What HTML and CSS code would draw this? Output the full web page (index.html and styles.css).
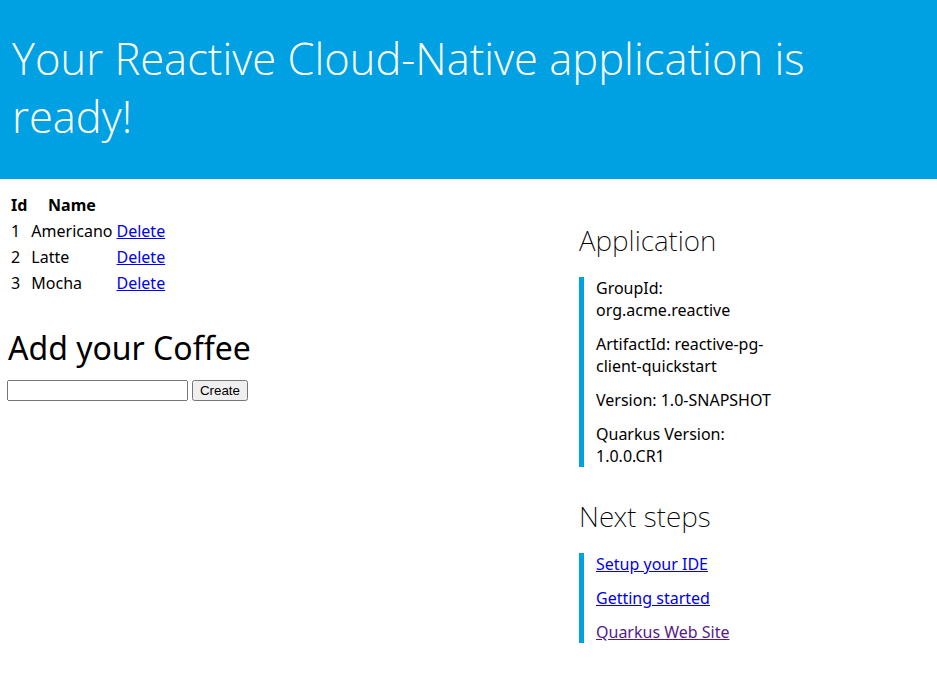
FILE: index.html
```html
<!DOCTYPE html>
<html>
<head>
<meta charset="utf-8">
<title>Coffee</title>
<link rel="stylesheet" href="styles.css">
</head>
<body>
<div class="banner">Your Reactive Cloud-Native application is ready!</div>
<div class="container">
  <div class="left-column">
    <table class="coffee-table">
      <tr><th>Id</th><th>Name</th><th></th></tr>
      <tr><td>1</td><td>Americano</td><td><a href="#" class="link">Delete</a></td></tr>
      <tr><td>2</td><td>Latte</td><td><a href="#" class="link">Delete</a></td></tr>
      <tr><td>3</td><td>Mocha</td><td><a href="#" class="link">Delete</a></td></tr>
    </table>
    <h2 class="add-title">Add your Coffee</h2>
    <form class="add-form">
      <input type="text" class="name-input"> <button type="button" class="create-btn">Create</button>
    </form>
  </div>
  <div class="right-column">
    <div class="right-section">
      <h3 class="section-title">Application</h3>
      <ul class="section-list">
        <li>GroupId: org.acme.reactive</li>
        <li>ArtifactId: reactive-pg-client-quickstart</li>
        <li>Version: 1.0-SNAPSHOT</li>
        <li>Quarkus Version: 1.0.0.CR1</li>
      </ul>
    </div>
    <div class="right-section">
      <h3 class="section-title">Next steps</h3>
      <ul class="section-list">
        <li><a href="#" class="link">Setup your IDE</a></li>
        <li><a href="#" class="link">Getting started</a></li>
        <li><a href="#" class="link visited">Quarkus Web Site</a></li>
      </ul>
    </div>
  </div>
</div>
</body>
</html>
```

FILE: styles.css
```css
html, body {
  margin: 0;
  padding: 0;
}
body {
  font-family: "Noto Sans", "Open Sans", sans-serif;
  font-size: 16px;
  color: #000;
  background: #fff;
}
.banner {
  font-family: "Open Sans", "Noto Sans", sans-serif;
  font-weight: 300;
  font-size: 43.5px;
  line-height: 58px;
  padding: 30px 12px 33px 12px;
  background-color: #00A1E2;
  color: #fff;
}
.container {
  display: flex;
  width: 100%;
}
.left-column {
  width: 542px;
  padding: 12px 0 0 7px;
  box-sizing: border-box;
}
.coffee-table {
  border-spacing: 2px;
  margin-left: 1px;
}
.coffee-table th, .coffee-table td {
  padding: 1px;
}
.coffee-table th {
  font-weight: 700;
  text-align: center;
}
.add-title {
  font-size: 32px;
  font-weight: 400;
  line-height: 1.5;
  margin: 26.6px 0 8px 1px;
}
.add-form {
  margin: 2px 0 0 0;
  display: flex;
  align-items: center;
  gap: 4px;
}
.name-input {
  width: 181px;
  height: 21px;
  box-sizing: border-box;
  margin: 0;
}
.create-btn {
  font-family: "Liberation Sans", Arial, sans-serif;
  font-size: 13.33px;
  height: 21px;
  width: 56px;
  padding: 0;
  margin: 0;
}
.right-column {
  width: 234px;
  padding: 12px 12px;
  box-sizing: content-box;
}
.right-section {
  margin-left: 25px;
}
.section-title {
  font-size: 28px;
  font-weight: 200;
  line-height: 1.5;
  margin: 28px 0 8px 0;
}
.section-list {
  border-left: 5px solid #00A1E2;
  list-style-type: none;
  padding-left: 0;
  margin: 16px 0;
}
.section-list li {
  margin: 12px;
}
.link {
  color: #0000EE;
}
.link.visited {
  color: #551A8B;
}
```
